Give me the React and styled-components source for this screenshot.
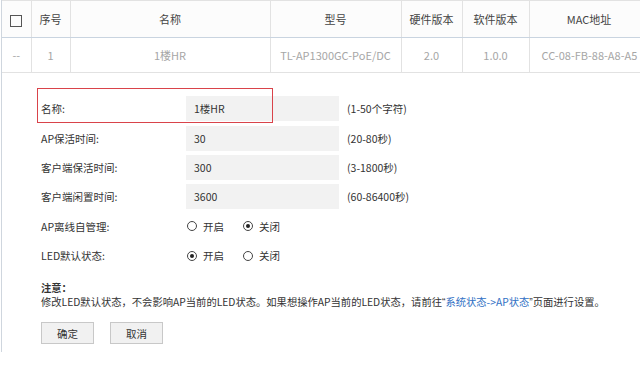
import React from 'react'
import styled, { createGlobalStyle } from 'styled-components'

const GlobalStyle = createGlobalStyle`
  body {
    margin: 0;
    background: #fff;
    font-family: "Noto Sans CJK SC", "Noto Sans", sans-serif;
    font-size: 10.5px;
    color: #333;
  }
`

const Page = styled.div`
  width: 640px;
  height: 365px;
  overflow: hidden;
  background: #fff;
`

const Frame = styled.div`
  margin-left: 1px;
  width: 700px;
  height: 352px;
  border-left: 1px solid #cfd6de;
`

const Table = styled.table`
  border-collapse: collapse;
  table-layout: fixed;
  width: 700px;
  font-size: 11px;
`

const Th = styled.th`
  height: 36px;
  padding: 0;
  font-weight: normal;
  color: #444;
  text-align: center;
  border-top: 1px solid #e2e2e2;
  border-right: 1px solid #e2e2e2;
  border-bottom: 1px solid #c9d4e0;
  background: #fcfcfc;
`

const Td = styled.td`
  height: 34px;
  padding: 0 0 0 ${p => (p.$left ? '12px' : '0')};
  color: #a6a6a6;
  text-align: ${p => (p.$left ? 'left' : 'center')};
  border-right: 1px solid #e2e2e2;
  border-bottom: 1px solid #e2e2e2;
  white-space: nowrap;
  overflow: ${p => (p.$left ? 'visible' : 'hidden')};
`

const Check = styled.span`
  display: inline-block;
  width: 10px;
  height: 10px;
  border: 1px solid #555;
  vertical-align: middle;
`

const Form = styled.div`
  padding: 21px 0 0 39px;
`

const Row = styled.div`
  position: relative;
  display: flex;
  align-items: center;
  height: 29.4px;
`

const Label = styled.div`
  width: 145px;
  color: #333;
`

const Input = styled.div`
  width: 145px;
  height: 25px;
  line-height: 25px;
  padding-left: 8px;
  background: #f2f2f2;
  color: #333;
`

const Hint = styled.div`
  margin-left: 8px;
  color: #333;
`

// red annotation frame drawn over the first field
const Highlight = styled.div`
  position: absolute;
  left: -4px;
  top: -6px;
  width: 234px;
  height: 33px;
  border: 1.5px solid #d9434a;
  pointer-events: none;
`

const Radio = styled.label`
  display: flex;
  align-items: center;
  gap: 6px;
  margin-right: 19px;
  color: #333;
  &:first-of-type {
    margin-left: 1px;
  }
`

const Dot = styled.span`
  width: 8px;
  height: 8px;
  border: 1px solid #444;
  border-radius: 50%;
  display: flex;
  align-items: center;
  justify-content: center;
  &::after {
    content: '';
    width: 4px;
    height: 4px;
    border-radius: 50%;
    background: ${p => (p.$on ? '#222' : 'transparent')};
  }
`

const Note = styled.div`
  margin-top: 11px;
  font-size: 10.3px;
  line-height: 13.5px;
  color: #333;
  white-space: nowrap;
`

const NoteTitle = styled.div`
  font-weight: bold;
`

const Quote = styled.span`
  font-family: "Liberation Sans", sans-serif;
`

const Link = styled.span`
  color: #2f6fc4;
`

const Buttons = styled.div`
  display: flex;
  gap: 16px;
  margin-top: 13px;
`

const Button = styled.button`
  width: 53px;
  height: 22px;
  padding: 0;
  font-family: inherit;
  font-size: 10.5px;
  color: #333;
  background: #f1f1f1;
  border: 1px solid #c8c8c8;
`

const cols = [29, 39, 200, 131, 61, 67, 120, 53]

const fields = [
  { label: '名称:', value: '1楼HR', hint: '(1-50个字符)', mark: true },
  { label: 'AP保活时间:', value: '30', hint: '(20-80秒)' },
  { label: '客户端保活时间:', value: '300', hint: '(3-1800秒)' },
  { label: '客户端闲置时间:', value: '3600', hint: '(60-86400秒)' },
]

const radios = [
  { label: 'AP离线自管理:', on: false },
  { label: 'LED默认状态:', on: true },
]

export default function App() {
  return (
    <Page>
      <GlobalStyle />
      <Frame>
        <Table>
          <colgroup>
            {cols.map((w, i) => (
              <col key={i} width={w} />
            ))}
          </colgroup>
          <thead>
            <tr>
              <Th>
                <Check />
              </Th>
              <Th>序号</Th>
              <Th>名称</Th>
              <Th>型号</Th>
              <Th>硬件版本</Th>
              <Th>软件版本</Th>
              <Th>MAC地址</Th>
              <Th />
            </tr>
          </thead>
          <tbody>
            <tr>
              <Td>--</Td>
              <Td>1</Td>
              <Td>1楼HR</Td>
              <Td>TL-AP1300GC-PoE/DC</Td>
              <Td>2.0</Td>
              <Td>1.0.0</Td>
              <Td $left>CC-08-FB-88-A8-A5</Td>
              <Td />
            </tr>
          </tbody>
        </Table>
        <Form>
          {fields.map(f => (
            <Row key={f.label}>
              {f.mark && <Highlight />}
              <Label>{f.label}</Label>
              <Input>{f.value}</Input>
              <Hint>{f.hint}</Hint>
            </Row>
          ))}
          {radios.map(r => (
            <Row key={r.label}>
              <Label>{r.label}</Label>
              <Radio>
                <Dot $on={r.on} />
                开启
              </Radio>
              <Radio>
                <Dot $on={!r.on} />
                关闭
              </Radio>
            </Row>
          ))}
          <Note>
            <NoteTitle>注意：</NoteTitle>
            修改LED默认状态，不会影响AP当前的LED状态。如果想操作AP当前的LED状态，请前往<Quote>“</Quote><Link>系统状态-&gt;AP状态</Link><Quote>”</Quote>页面进行设置。
          </Note>
          <Buttons>
            <Button>确定</Button>
            <Button>取消</Button>
          </Buttons>
        </Form>
      </Frame>
    </Page>
  )
}
